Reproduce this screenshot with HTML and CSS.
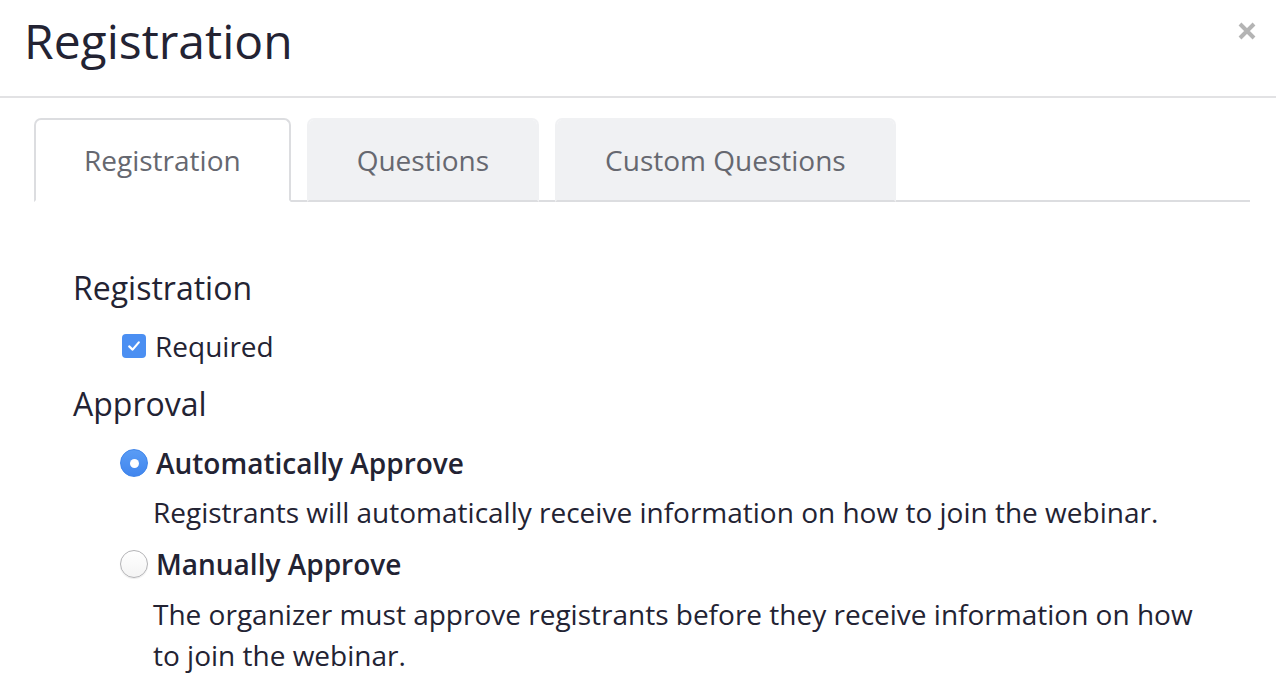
FILE: index.html
```html
<!DOCTYPE html>
<html lang="en">
<head>
<meta charset="utf-8">
<title>Registration</title>
<link rel="stylesheet" href="styles.css">
</head>
<body>
<div class="modal">
  <header class="modal-header">
    <h1 class="modal-title">Registration</h1>
    <button class="close" aria-label="Close">
      <svg width="18" height="18" viewBox="0 0 18 18"><path d="M2 2 L16 16 M16 2 L2 16" stroke="#b4b4b4" stroke-width="4" fill="none"/></svg>
    </button>
  </header>
  <ul class="tabs">
    <li class="tab active">Registration</li>
    <li class="tab">Questions</li>
    <li class="tab">Custom Questions</li>
  </ul>
  <section class="pane">
    <h2 class="section-title first">Registration</h2>
    <label class="row check-row">
      <span class="slot"><span class="checkbox"><svg width="16" height="16" viewBox="0 0 16 16"><path d="M3.2 8.4 L6.6 11.6 L12.8 4.4" stroke="#fff" stroke-width="2.2" fill="none" stroke-linecap="round" stroke-linejoin="round"/></svg></span></span>
      <span class="row-text">Required</span>
    </label>
    <h2 class="section-title">Approval</h2>
    <label class="row option-row auto">
      <span class="slot"><span class="radio checked"></span></span>
      <span class="row-text bold">Automatically Approve</span>
    </label>
    <p class="desc first-desc">Registrants will automatically receive information on how to join the webinar.</p>
    <label class="row option-row manual">
      <span class="slot"><span class="radio"></span></span>
      <span class="row-text bold">Manually Approve</span>
    </label>
    <p class="desc second-desc">The organizer must approve registrants before they receive information on how to join the webinar.</p>
  </section>
</div>
</body>
</html>
```

FILE: styles.css
```css
* { box-sizing: border-box; }
html, body {
  margin: 0;
  padding: 0;
  background: #fff;
}
body {
  font-family: "Open Sans", "Noto Sans", sans-serif;
  color: #232333;
  width: 1276px;
  height: 690px;
  overflow: hidden;
}
.modal-header {
  height: 98px;
  border-bottom: 2px solid #e2e2e4;
  display: flex;
  justify-content: space-between;
  align-items: flex-start;
  padding: 9px 20px 0 24px;
}
.modal-title {
  margin: 0;
  font-size: 48px;
  line-height: 64px;
  font-weight: 400;
  color: #232333;
}
.close {
  border: 0;
  background: none;
  padding: 0;
  margin-top: 13px;
  width: 18px;
  height: 18px;
  display: flex;
}
.tabs {
  list-style: none;
  margin: 20px 26px 0 34px;
  padding: 0;
  display: flex;
  align-items: flex-end;
  gap: 16px;
  border-bottom: 2px solid #dcdde0;
}
.tab {
  margin-bottom: -2px;
  padding: 20px 48px;
  font-size: 28px;
  line-height: 40px;
  color: #666870;
  background: #f0f1f3;
  background-clip: padding-box;
  border: 2px solid #f0f1f3;
  border-bottom-color: transparent;
  border-radius: 7px 7px 0 0;
}
.tab.active {
  background: #fff;
  border-color: #dcdde0;
  border-bottom-color: #fff;
}
.pane {
  padding: 66px 66px 0 73px;
}
.section-title {
  margin: 18px 0 0 0;
  font-size: 32px;
  line-height: 40px;
  font-weight: 400;
}
.section-title.first { margin-top: 0; }
.row {
  display: flex;
  align-items: center;
  margin-left: 47px;
  font-size: 28px;
  line-height: 40px;
}
.check-row { margin-top: 18px; }
.slot {
  width: 28px;
  height: 28px;
  display: flex;
  align-items: center;
  justify-content: center;
  margin-right: 7px;
}
.option-row .slot { margin-right: 8px; }
.checkbox {
  width: 24px;
  height: 24px;
  border-radius: 4px;
  background: #4b8ff2;
  display: flex;
  align-items: center;
  justify-content: center;
}
.radio {
  width: 28px;
  height: 28px;
  border-radius: 50%;
  border: 1px solid #b3b3b6;
  background: linear-gradient(#ffffff, #f4f4f4);
  box-shadow: 0 1px 1px rgba(0,0,0,0.08);
  display: flex;
  align-items: center;
  justify-content: center;
}
.radio.checked {
  border-color: #3f85ea;
  background: linear-gradient(#5a9cf5, #4186ee);
  box-shadow: none;
}
.radio.checked::after {
  content: "";
  width: 9px;
  height: 9px;
  border-radius: 50%;
  background: #fff;
}
.bold { font-weight: 600; }
.option-row.auto { margin-top: 19px; }
.option-row.manual { margin-top: 11px; }
.desc {
  margin: 9px 0 0 80px;
  font-size: 28px;
  line-height: 41px;
  max-width: 1060px;
}
.second-desc { margin-top: 10px; }
```
